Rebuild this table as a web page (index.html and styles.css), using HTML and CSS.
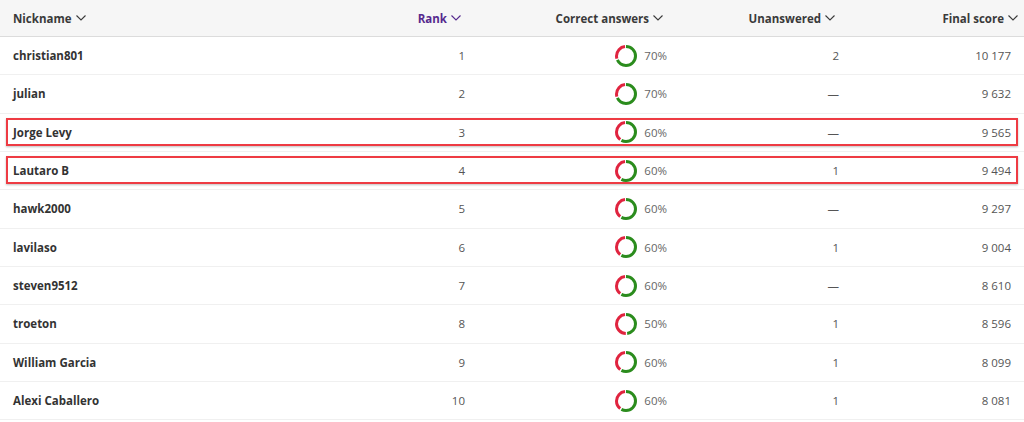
FILE: index.html
```html
<!DOCTYPE html>
<html>
<head>
<meta charset="utf-8">
<link rel="stylesheet" href="styles.css">
</head>
<body>
<div class="table">
  <div class="row head">
    <div class="cell c1">Nickname <svg class="chev" viewBox="0 0 10 6"><polyline points="0.5,0.5 5,5 9.5,0.5"/></svg></div>
    <div class="cell c2 active">Rank <svg class="chev" viewBox="0 0 10 6"><polyline points="0.5,0.5 5,5 9.5,0.5"/></svg></div>
    <div class="cell c3">Correct answers <svg class="chev" viewBox="0 0 10 6"><polyline points="0.5,0.5 5,5 9.5,0.5"/></svg></div>
    <div class="cell c4">Unanswered <svg class="chev" viewBox="0 0 10 6"><polyline points="0.5,0.5 5,5 9.5,0.5"/></svg></div>
    <div class="cell c5">Final score <svg class="chev" viewBox="0 0 10 6"><polyline points="0.5,0.5 5,5 9.5,0.5"/></svg></div>
  </div>
  <div id="rows"></div>
</div>
<script src="app.js"></script>
</body>
</html>
```

FILE: app.js
```js
const data = [
  ["christian801", 1, 70, "2", "10 177", false],
  ["julian", 2, 70, "—", "9 632", false],
  ["Jorge Levy", 3, 60, "—", "9 565", true],
  ["Lautaro B", 4, 60, "1", "9 494", true],
  ["hawk2000", 5, 60, "—", "9 297", false],
  ["lavilaso", 6, 60, "1", "9 004", false],
  ["steven9512", 7, 60, "—", "8 610", false],
  ["troeton", 8, 50, "1", "8 596", false],
  ["William Garcia", 9, 60, "1", "8 099", false],
  ["Alexi Caballero", 10, 60, "1", "8 081", false]
];
const R = 9.5;
const C = 2 * Math.PI * R;
const gap = 1.4;
const rows = document.getElementById("rows");
rows.innerHTML = data.map(([n, r, p, u, s, hl]) => {
  const g = C * p / 100;
  const red = C - g;
  return `<div class="row body${hl ? " hl" : ""}">
    <div class="cell c1 name">${n}</div>
    <div class="cell c2">${r}</div>
    <div class="cell c3"><svg class="donut" viewBox="0 0 24 24">
      <circle class="seg green" cx="12" cy="12" r="${R}" stroke-dasharray="${g - gap} ${C}" stroke-dashoffset="0" transform="rotate(-90 12 12)"/>
      <circle class="seg red" cx="12" cy="12" r="${R}" stroke-dasharray="${red - gap} ${C}" stroke-dashoffset="${-g}" transform="rotate(-90 12 12)"/>
    </svg><span class="pct">${p}%</span></div>
    <div class="cell c4">${u}</div>
    <div class="cell c5">${s}</div>
  </div>`;
}).join("");
```

FILE: styles.css
```css
* { box-sizing: border-box; }
html, body { margin: 0; padding: 0; background: #fff; }
body { font-family: "Open Sans", "Liberation Sans", sans-serif; color: #333; }
.table { width: 1024px; }
.row {
  display: grid;
  grid-template-columns: 300px 168px 204px 172px 180px;
  align-items: center;
}
.head {
  height: 37px;
  background: #f6f6f6;
  border-bottom: 1px solid #dcdcdc;
  font-weight: 700;
  font-size: 11.5px;
  color: #3a3a3a;
}
.cell { display: flex; align-items: center; justify-content: flex-end; white-space: nowrap; }
.c1 { justify-content: flex-start; padding-left: 13px; }
.head .c2 { padding-right: 7px; }
.head .c3 { padding-right: 9px; }
.head .c4 { padding-right: 9px; }
.head .c5 { padding-right: 6px; }
.head .active { color: #56298e; }
.chev { width: 10px; height: 6px; margin-left: 4px; fill: none; stroke: currentColor; stroke-width: 1.1; }
.body {
  height: 38.33px;
  border-bottom: 1px solid #f0f0f0;
  font-size: 11.5px;
  color: #555;
  position: relative;
}
.body .name { font-weight: 700; color: #333; }
.body .c2 { padding-right: 3px; }
.body .c3 { padding-right: 5px; }
.body .c4 { padding-right: 5px; }
.body .c5 { padding-right: 13px; }
.donut { width: 24px; height: 24px; margin-right: 6px; }
.seg { fill: none; stroke-width: 3; }
.green { stroke: #2b8c1d; }
.red { stroke: #e0243f; }
.pct { color: #666; }
.hl::after {
  content: "";
  position: absolute;
  left: 6px; right: 6px; top: 4px; bottom: 5px;
  border: 2px solid #ee3b43;
  box-shadow: 0 1px 2px rgba(0,0,0,0.25);
  pointer-events: none;
}
```
